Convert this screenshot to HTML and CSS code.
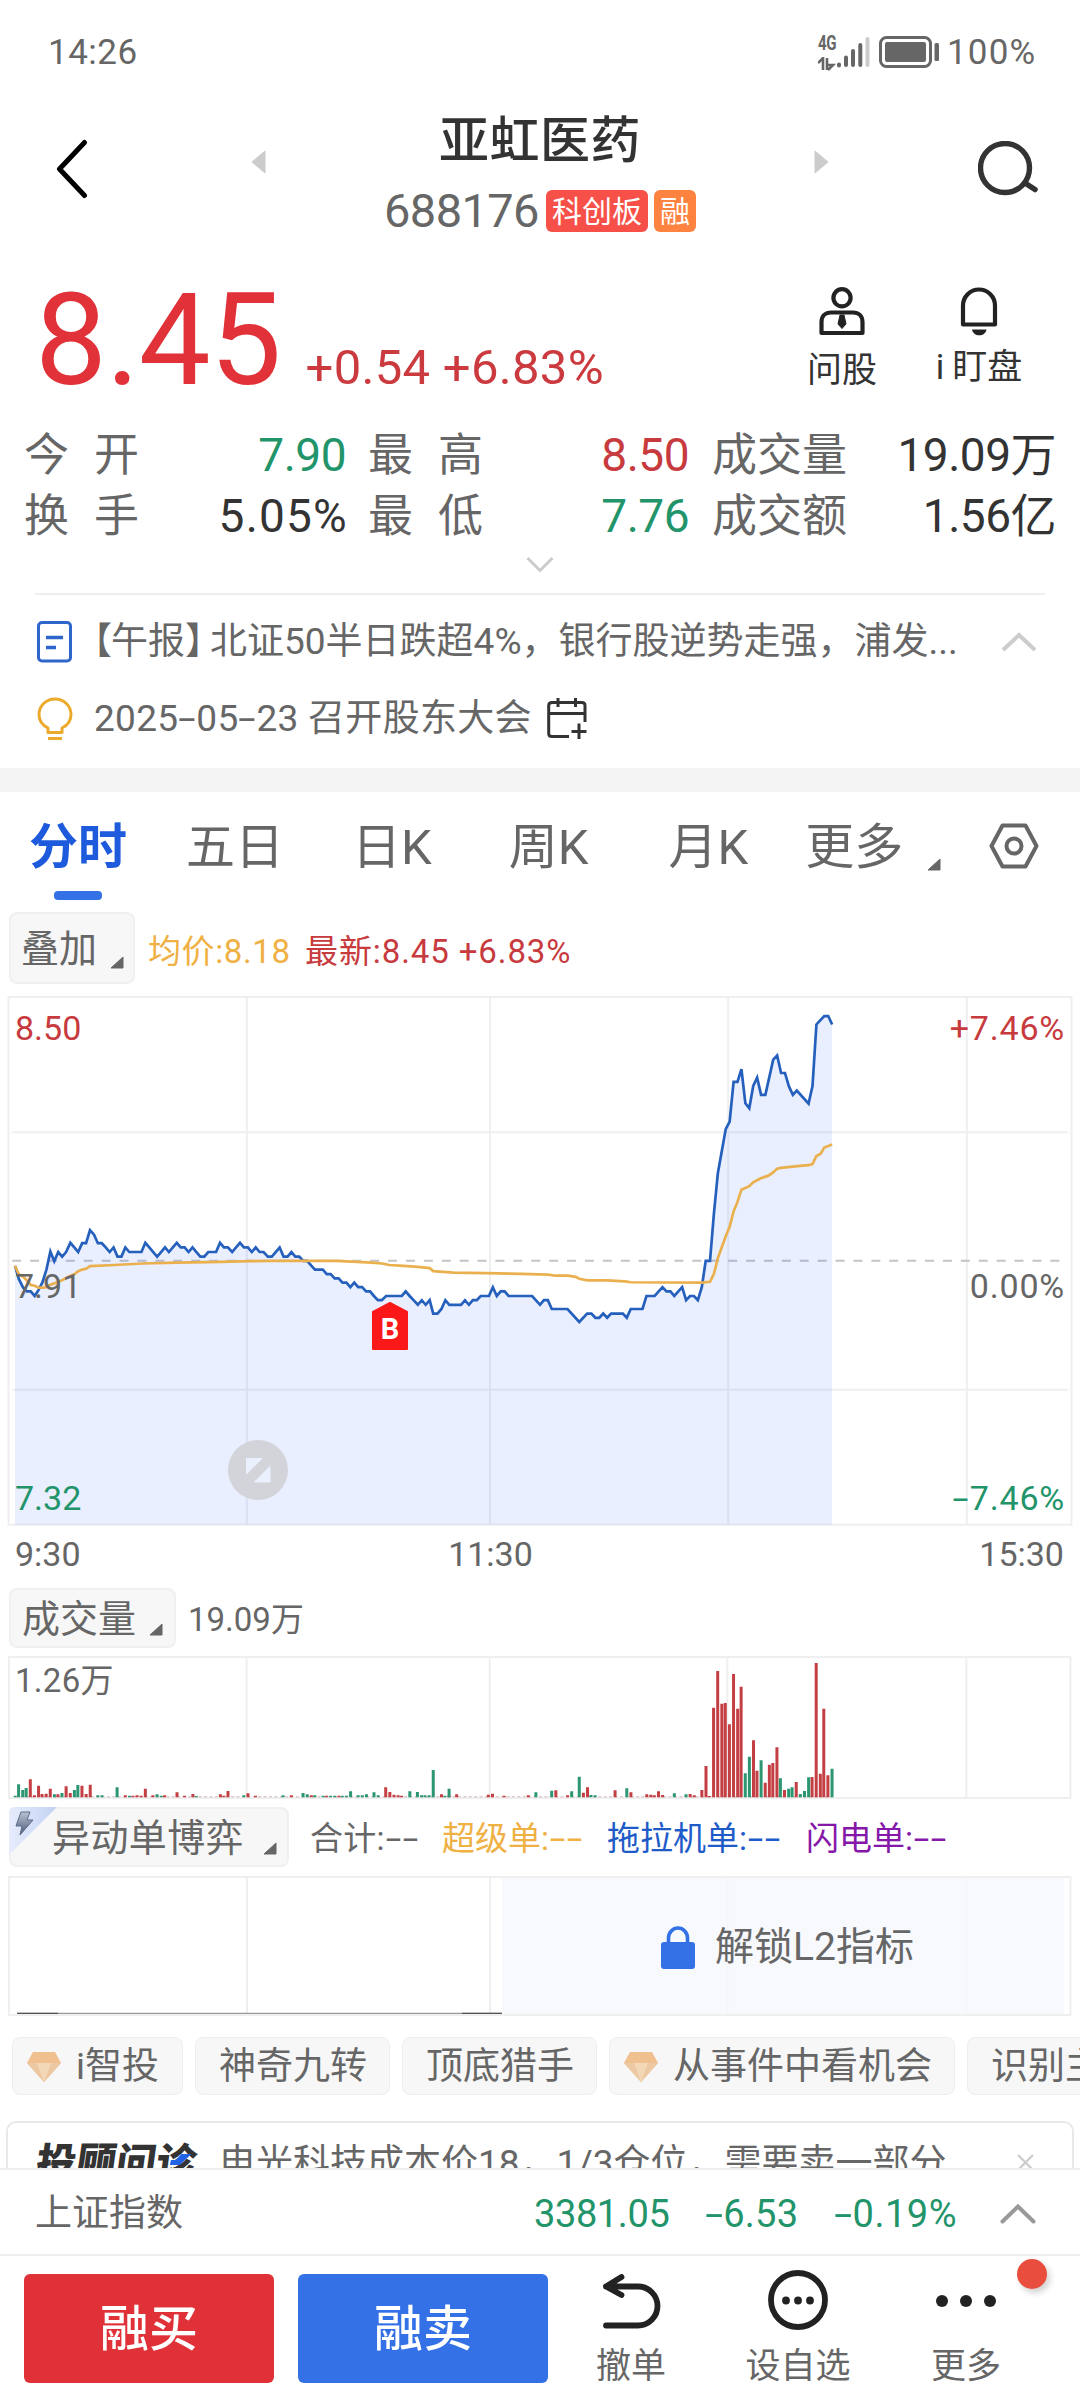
FILE: index.html
```html
<!DOCTYPE html>
<html lang="zh-CN">
<head>
<meta charset="utf-8">
<title>亚虹医药 688176</title>
<link rel="stylesheet" href="styles.css">
</head>
<body>
<div class="status">
  <span class="clock">14:26</span>
  <div class="net">
    <b>4G</b>
    <svg width="20" height="14" viewBox="0 0 20 14"><path d="M0 6L5 1V13M9 13V1M9 8H15L10 13" fill="none" stroke="#666" stroke-width="2.6"/></svg>
  </div>
  <svg class="bars" width="34" height="32" viewBox="0 0 34 32"><g stroke="#666" stroke-width="4" stroke-linecap="round"><path d="M3 28.500V29.500M10 21.500V29M17 15V29M24.300 9V29"/><path d="M31.500 3V29" stroke="#ccc"/></g></svg>
  <svg class="batt" width="60" height="33" viewBox="0 0 60 33"><rect x="1.500" y="1.500" width="50" height="29" rx="6" fill="none" stroke="#666" stroke-width="3"/><rect x="6" y="6" width="41" height="20" rx="2" fill="#666"/><rect x="55.500" y="7" width="4.500" height="18" rx="1.500" fill="#666"/></svg>
  <span class="pct">100%</span>
</div>

<header class="header">
  <svg class="back" width="33" height="60" viewBox="0 0 33 60"><path d="M28.500 3.500L3.500 30L28.500 56.500" fill="none" stroke="#000" stroke-width="5" stroke-linecap="round" stroke-linejoin="round"/></svg>
  <svg class="prev" width="15" height="24" viewBox="0 0 15 24"><path d="M14 1V23L1 12Z" fill="#ccc" stroke="#ccc" stroke-linejoin="round"/></svg>
  <div class="name">
    <h1>亚虹医药</h1>
    <div class="code"><span>688176</span><i class="tag red">科创板</i><i class="tag orange">融</i></div>
  </div>
  <svg class="next" width="15" height="24" viewBox="0 0 15 24"><path d="M1 1V23L14 12Z" fill="#ccc" stroke="#ccc" stroke-linejoin="round"/></svg>
  <svg class="search" width="62" height="56" viewBox="0 0 62 56"><circle cx="27" cy="27" r="24.500" fill="none" stroke="#333" stroke-width="5.400"/><path d="M47 42L57 48.500" stroke="#333" stroke-width="5.500" stroke-linecap="round"/></svg>
</header>

<section class="quote">
  <div class="price">
    <strong>8.45</strong>
    <span>+0.54 +6.83%</span>
  </div>
  <div class="tool ask">
    <svg width="46" height="49" viewBox="0 0 46 49" fill="none" stroke="#222" stroke-width="4.200"><circle cx="23" cy="10.800" r="8.600"/><path d="M2.500 46V35C2.500 29 6.500 25.500 12 25.500H34C39.500 25.500 43.500 29 43.500 35V46Z" stroke-linejoin="round"/><path d="M21 28H25L27 37L23 41.500L19 37Z" fill="#222" stroke="#222" stroke-width="1"/></svg>
    <span>问股</span>
  </div>
  <div class="tool watch">
    <svg width="38" height="49" viewBox="0 0 38 49"><path d="M3 37.500V18.500A16 16 0 0 1 35 18.500V37.500Z" fill="none" stroke="#222" stroke-width="4.200" stroke-linejoin="round"/><path d="M12 42.500H26.500C26 46 23 48.300 19.300 48.300S12.500 46 12 42.500Z" fill="#222"/></svg>
    <span><em>i</em>盯盘</span>
  </div>
</section>

<section class="stats">
  <div><span class="two">今开</span><b class="green">7.90</b></div>
  <div><span class="two">最高</span><b class="red">8.50</b></div>
  <div><span>成交量</span><b class="dark">19.09万</b></div>
  <div><span class="two">换手</span><b class="dark rate">5.05%</b></div>
  <div><span class="two">最低</span><b class="green">7.76</b></div>
  <div><span>成交额</span><b class="dark">1.56亿</b></div>
</section>
<svg class="expand" width="28" height="17" viewBox="0 0 28 17"><path d="M1.500 2L14 14.500L26.500 2" fill="none" stroke="#ccc" stroke-width="3"/></svg>

<section class="news">
  <div class="item">
    <svg width="35" height="42" viewBox="0 0 35 42" fill="none" stroke="#2f66cc"><rect x="1.500" y="1.500" width="32" height="38.500" rx="3.500" stroke-width="3"/><path d="M9 16.500H26M9 26.500H19" stroke-width="3.400"/></svg>
    <p><span class="lb">【</span>午报<span class="rb">】</span>北证50半日跌超4%，银行股逆势走强，浦发...</p>
    <svg class="up" width="36" height="20" viewBox="0 0 36 20"><path d="M2 18L18 3L34 18" fill="none" stroke="#ccc" stroke-width="4"/></svg>
  </div>
  <div class="item">
    <svg width="36" height="44" viewBox="0 0 36 44" fill="none" stroke="#ecaa2c" stroke-width="3"><path d="M11 35.500V31C5 28 2 22.500 2 17.500A16 15.500 0 0 1 34 17.500C34 22.500 31 28 25 31V35.500Z" stroke-linejoin="round"/><path d="M11 41.500H25"/></svg>
    <p>2025<span class="dash">-</span>05<span class="dash">-</span>23 召开股东大会</p>
    <svg class="cal" width="40" height="42" viewBox="0 0 40 42" fill="none" stroke="#333" stroke-width="3"><path d="M22 38.500H5C3 38.500 1.700 37.300 1.700 35.500V7.500C1.700 5.700 3 4.500 5 4.500H35C37 4.500 38 5.700 38 7.500V24M2 15.500H38M11 0V9M28.500 0V9M32 25.500V41M24.500 33.500H39.500"/></svg>
  </div>
</section>

<nav class="tabs">
  <a class="on">分时</a><a class="t2">五日</a><a class="t3">日K</a><a class="t4">周K</a><a class="t5">月K</a><a class="t6">更多</a>
  <svg class="tri" width="14" height="13" viewBox="0 0 14 13"><path d="M13 1V12H1Z" fill="#666" stroke="#666" stroke-linejoin="round"/></svg>
  <svg class="gear" width="50" height="46" viewBox="0 0 50 46" fill="none" stroke="#666" stroke-width="4"><path d="M13.500 2.500H36.500L47.500 23L36.500 43.500H13.500L2.500 23Z" stroke-linejoin="round"/><circle cx="25" cy="23" r="7.500"/></svg>
</nav>

<div class="legend overlay">
  <button>叠加<svg width="14" height="13" viewBox="0 0 14 13"><path d="M13 1V12H1Z" fill="#666" stroke="#666" stroke-linejoin="round"/></svg></button>
  <span class="amber">均价:8.18</span><span class="red">最新:8.45 +6.83%</span>
</div>

<div class="chart">
  <svg width="1080" height="532" viewBox="0 39 3024 1391" preserveAspectRatio="none">
    <g class="grid"><path d="M24 44H3000V1424H24ZM691 44V1424M1372 44V1424M2039 44V1424M2707 44V1424M34 398H2990M34 1071H2990"/></g>
    <path d="M34 734H2990" fill="none" stroke="#c4c4c6" stroke-width="2" stroke-dasharray="9 8.900" vector-effect="non-scaling-stroke"/>
    <path class="area" d="M42,747 53,782 64,803 75,814 86,814 97,826 108,810 119,790 130,757 141,710 152,735 163,711 174,723 185,711 197,687 208,699 219,711 230,688 241,688 252,654 263,665 274,688 285,688 296,699 307,711 318,699 329,723 340,723 351,699 362,711 396,711 407,687 418,699 429,711 440,723 451,711 462,699 473,711 484,699 495,687 506,699 517,699 528,711 539,699 550,711 561,723 572,723 583,711 605,711 616,687 627,699 638,699 650,711 661,699 672,687 683,699 694,699 705,711 716,699 727,711 738,711 750,723 761,723 772,711 783,699 794,723 805,723 816,711 827,723 838,723 849,734 860,734 871,746 882,757 904,757 915,769 926,769 937,780 948,780 959,791 970,791 981,803 992,791 1003,803 1014,803 1025,814 1036,814 1047,826 1058,837 1069,837 1081,826 1125,826 1136,814 1147,826 1158,837 1170,849 1181,837 1192,849 1203,837 1213,872 1225,872 1236,860 1247,837 1258,849 1291,849 1302,837 1313,849 1324,837 1335,837 1346,826 1369,826 1380,803 1391,826 1402,814 1413,814 1424,826 1490,826 1512,849 1523,837 1534,837 1545,860 1589,860 1622,894 1644,872 1656,872 1667,883 1678,883 1689,872 1700,883 1711,872 1744,872 1755,883 1766,860 1799,860 1810,826 1833,826 1855,803 1866,814 1877,814 1888,826 1910,803 1921,837 1932,826 1943,826 1954,837 1965,803 1976,734 1988,734 1999,610 2010,505 2032,390 2043,370 2054,266 2065,266 2076,233 2087,322 2098,335 2109,277 2120,255 2131,300 2143,300 2165,208 2176,197 2187,243 2198,243 2209,278 2220,300 2231,289 2264,323 2275,277 2286,116 2308,94 2319,94 2330,116V1424H42Z"/>
    <path class="line blue" d="M42,747 53,782 64,803 75,814 86,814 97,826 108,810 119,790 130,757 141,710 152,735 163,711 174,723 185,711 197,687 208,699 219,711 230,688 241,688 252,654 263,665 274,688 285,688 296,699 307,711 318,699 329,723 340,723 351,699 362,711 396,711 407,687 418,699 429,711 440,723 451,711 462,699 473,711 484,699 495,687 506,699 517,699 528,711 539,699 550,711 561,723 572,723 583,711 605,711 616,687 627,699 638,699 650,711 661,699 672,687 683,699 694,699 705,711 716,699 727,711 738,711 750,723 761,723 772,711 783,699 794,723 805,723 816,711 827,723 838,723 849,734 860,734 871,746 882,757 904,757 915,769 926,769 937,780 948,780 959,791 970,791 981,803 992,791 1003,803 1014,803 1025,814 1036,814 1047,826 1058,837 1069,837 1081,826 1125,826 1136,814 1147,826 1158,837 1170,849 1181,837 1192,849 1203,837 1213,872 1225,872 1236,860 1247,837 1258,849 1291,849 1302,837 1313,849 1324,837 1335,837 1346,826 1369,826 1380,803 1391,826 1402,814 1413,814 1424,826 1490,826 1512,849 1523,837 1534,837 1545,860 1589,860 1622,894 1644,872 1656,872 1667,883 1678,883 1689,872 1700,883 1711,872 1744,872 1755,883 1766,860 1799,860 1810,826 1833,826 1855,803 1866,814 1877,814 1888,826 1910,803 1921,837 1932,826 1943,826 1954,837 1965,803 1976,734 1988,734 1999,610 2010,505 2032,390 2043,370 2054,266 2065,266 2076,233 2087,322 2098,335 2109,277 2120,255 2131,300 2143,300 2165,208 2176,197 2187,243 2198,243 2209,278 2220,300 2231,289 2264,323 2275,277 2286,116 2308,94 2319,94 2330,116"/>
    <path class="line gold" d="M42,747 53,770 64,775 75,785 86,797 97,799 108,804 125,804 140,797 160,790 175,784 197,773 208,769 219,761 230,757 241,755 252,748 320,745 400,741 495,739 620,737 700,735 760,734 940,734 1000,737 1040,739 1070,741 1090,745 1130,747 1170,750 1203,753 1213,761 1270,765 1360,766 1460,768 1534,770 1556,773 1590,773 1612,776 1622,781 1645,785 1700,785 1750,788 1766,790 1965,791 1988,789 1999,768 2010,727 2032,670 2043,645 2054,605 2065,580 2076,548 2098,539 2109,529 2130,518 2150,512 2165,503 2176,493 2186,491 2240,486 2264,484 2275,481 2286,460 2298,454 2308,438 2330,430"/>
  </svg>
  <span class="lab l top red">8.50</span><span class="lab l mid">7.91</span><span class="lab l bot green">7.32</span>
  <span class="lab r top red">+7.46%</span><span class="lab r mid">0.00%</span><span class="lab r bot green"><span class="dash">-</span>7.46%</span>
  <span class="mark"><svg width="36" height="49" viewBox="0 0 36 49"><path d="M18 1L35 10V47H1V10Z" fill="#fa1818" stroke="#fa1818" stroke-width="2" stroke-linejoin="round"/></svg><b>B</b></span>
  <svg class="full" width="60" height="60" viewBox="0 0 60 60"><circle cx="30" cy="30" r="30" fill="#d3d4d9"/><path d="M18.500 18.500H34L18.500 34Z" fill="#ebf0fe" stroke="#ebf0fe"/><path d="M42 26.500V42H26.500Z" fill="#ebf0fe" stroke="#ebf0fe"/></svg>
</div>
<div class="axis"><span>9:30</span><span>11:30</span><span>15:30</span></div>

<div class="legend vol">
  <button>成交量<svg width="14" height="13" viewBox="0 0 14 13"><path d="M13 1V12H1Z" fill="#666" stroke="#666" stroke-linejoin="round"/></svg></button>
  <span>19.09万</span>
</div>
<div class="chart volume">
  <svg width="1080" height="145" viewBox="0 285 1568 435" preserveAspectRatio="none">
    <g class="grid"><path d="M13 291H1554V714H13ZM358 291V714M711 291V714M1056 291V714M1403 291V714"/></g>
    <path d="M22 710H1208" stroke="#dccccc" stroke-width="1.500" stroke-dasharray="3 2.400" vector-effect="non-scaling-stroke"/>
    <path class="bar up" d="M44 712V658M50 712V706M56 712V677M61 712V702M67 712V701M73 712V686M84 712V703M96 712V679M102 712V699M119 712V677M125 712V702M131 712V674M182 712V706M193 712V707M199 712V706M205 712V707M211 712V686M222 712V706M239 712V706M257 712V697M268 712V707M280 712V702M320 712V703M331 712V693M325 712V707M360 712V700M371 712V707M423 712V706M452 712V706M474 712V707M492 712V707M560 712V682M566 712V696M572 712V704M578 712V706M583 712V707M641 712V703M652 712V706M663 712V703M709 712V704M715 712V701M732 712V707M767 712V706M807 712V691M824 712V706M847 712V698M853 712V682M893 712V691M916 712V697M939 712V703M945 712V704M950 712V706M956 712V694M962 712V705M1002 712V702M1008 712V706M1019 712V690M1025 712V618M1030 712V708M1036 712V443M1042 712V333M1048 712V431M1053 712V429M1059 712V493M1065 712V342M1071 712V446M1076 712V380M1094 712V541M1099 712V632M1111 712V668M1117 712V614M1122 712V609M1128 712V562M1139 712V690M1156 712V666M1179 712V651M1185 712V309M1191 712V641M1196 712V446M1202 712V646"/>
    <path class="bar down" d="M22 712V707M27 712V673M33 712V690M38 712V684M79 712V703M90 712V699M108 712V690M113 712V675M142 712V706M148 712V706M170 712V682M188 712V707M228 712V703M234 712V707M285 712V708M354 712V706M411 712V706M440 712V699M446 712V703M457 712V706M469 712V707M480 712V707M486 712V707M497 712V707M503 712V707M509 712V694M520 712V706M526 712V706M532 712V703M543 712V697M549 712V706M595 712V694M606 712V696M612 712V706M617 712V706M623 712V706M629 712V630M646 712V707M652 712V686M778 712V697M801 712V692M830 712V694M841 712V650M858 712V705M864 712V706M910 712V685M979 712V700M996 712V703M1082 712V640M1088 712V590M1105 712V601M1133 712V655M1145 712V686M1150 712V682M1162 712V702M1168 712V693M1174 712V652M1208 712V626"/>
  </svg>
  <span class="lab vmax">1.26万</span>
</div>

<div class="legend flow">
  <button><svg class="bolt" width="49" height="49" viewBox="0 0 49 49"><defs><linearGradient id="c" x1="0" y1="0" x2="1" y2="0"><stop offset="0" stop-color="#e6ecfb"/><stop offset="1" stop-color="#c3d2f4"/></linearGradient><linearGradient id="z" x1="0" y1="0" x2="0" y2="1"><stop offset="0" stop-color="#b9c3d3"/><stop offset="1" stop-color="#4a5a78"/></linearGradient></defs><path d="M6 0H48L0 48V6Q0 0 6 0Z" fill="url(#c)"/><path d="M12 5H21L18 13H24L11 28L13 19H7Z" fill="url(#z)" stroke="#5d6c88"/></svg>异动单博弈<svg width="14" height="13" viewBox="0 0 14 13"><path d="M13 1V12H1Z" fill="#666" stroke="#666" stroke-linejoin="round"/></svg></button>
  <span class="f1">合计:<i class="dash">-</i><i class="dash">-</i></span><span class="f2 amber">超级单:<i class="dash">-</i><i class="dash">-</i></span><span class="f3">拖拉机单:<i class="dash">-</i><i class="dash">-</i></span><span class="f4">闪电单:<i class="dash">-</i><i class="dash">-</i></span>
</div>
<div class="chart level2">
  <svg width="1080" height="142" viewBox="0 0 1080 142">
    <g class="grid"><path d="M9 2H1070.500V140H9ZM247 2V140M490 2V140M727.500 2V140M966.500 2V140"/></g>
    <path d="M502 3H1064V139H502Z" fill="#f5f8fd" fill-opacity=".8"/>
    <path d="M17 138.300H502" stroke="#999" stroke-width="1.300"/><path d="M17 138.300H58M462 138.300H502" stroke="#555" stroke-width="1.300"/>
  </svg>
  <div class="unlock"><svg width="34" height="43" viewBox="0 0 34 43"><rect y="16" width="34" height="27" rx="3" fill="#3470e6"/><path d="M7.500 18V12A9.500 10 0 0 1 26.500 12V18" fill="none" stroke="#3470e6" stroke-width="3.600"/></svg><span>解锁L2指标</span></div>
</div>

<div class="chips">
  <a class="c1"><svg width="34" height="30" viewBox="0 0 34 30"><path d="M6 0H28L34 11L17 30L0 11Z" fill="#f0c08f"/><path d="M0 11H34L17 30Z" fill="#ecc9a2"/><path d="M10 11H24L17 30Z" fill="#f3d8b8"/></svg>i智投</a><a class="c2">神奇九转</a><a class="c3">顶底猎手</a><a class="c4"><svg width="34" height="30" viewBox="0 0 34 30"><path d="M6 0H28L34 11L17 30L0 11Z" fill="#f0c08f"/><path d="M0 11H34L17 30Z" fill="#ecc9a2"/><path d="M10 11H24L17 30Z" fill="#f3d8b8"/></svg>从事件中看机会</a><a class="c5">识别主</a>
</div>

<div class="advice-clip">
  <div class="advice">
    <b>投顾问诊<svg width="20" height="12" viewBox="0 0 20 12"><path d="M0 6H5L10 0H20L10 11H0Z" fill="#2063e6"/></svg></b>
    <span>电光科技成本价18，1/3仓位，需要卖一部分</span>
    <svg class="close" width="17" height="17" viewBox="0 0 17 17"><path d="M1 1L16 16M16 1L1 16" stroke="#ccc" stroke-width="2.200"/></svg>
  </div>
</div>

<div class="index">
  <span class="iname">上证指数</span><span class="i1">3381.05</span><span class="i2"><i class="dash">-</i>6.53</span><span class="i3"><i class="dash">-</i>0.19%</span>
  <svg width="36" height="21" viewBox="0 0 36 21"><path d="M2.500 18.500L18 3.500L33.500 18.500" fill="none" stroke="#999" stroke-width="4" stroke-linecap="round"/></svg>
</div>

<footer class="actions">
  <a class="btn buy">融买</a><a class="btn sell">融卖</a>
  <a class="act undo"><svg width="58" height="55" viewBox="0 0 58 55" fill="none" stroke="#222" stroke-width="5.800" stroke-linecap="round" stroke-linejoin="round"><path d="M3 51.500H35A19.500 19.500 0 0 0 35 12.500H3M18.500 3L3 12.500L18.500 21"/></svg><span>撤单</span></a>
  <a class="act fav"><svg width="60" height="60" viewBox="0 0 60 60"><circle cx="30" cy="30" r="27" fill="none" stroke="#222" stroke-width="5.800"/><g fill="#222"><circle cx="18" cy="30.500" r="3.900"/><circle cx="30" cy="30.500" r="3.900"/><circle cx="42" cy="30.500" r="3.900"/></g></svg><span>设自选</span></a>
  <a class="act more"><svg width="62" height="14" viewBox="0 0 62 14" fill="#222"><circle cx="7" cy="7" r="6"/><circle cx="31" cy="7" r="6"/><circle cx="55" cy="7" r="6"/></svg><span>更多</span><i class="dot"></i></a>
</footer>
</body>
</html>
```
FILE: styles.css
```css
* { box-sizing: border-box; }
body {
  margin: 0; width: 1080px; height: 2400px; overflow: hidden; background: #fff; color: #666;
  font-family: Roboto, "Noto Sans CJK SC", sans-serif; font-size: 37px; line-height: 60px; white-space: nowrap;
}
svg { display: block; flex: none; }
i, em { font-style: normal; }
a, span { flex: none; }
.red { color: #c73a3d; }
.green { color: #22946a; }
.amber { color: #efb044; }
.dash { display: inline-block; margin: 0 .1em; transform: scaleX(1.7); }

.status { display: flex; align-items: center; height: 104px; padding-left: 48px; font-size: 35px; }
.clock { width: 770px; padding-top: 1px; letter-spacing: .5px; }
.pct { padding-top: 1px; letter-spacing: 1.2px; }
.net { width: 18px; height: 31px; }
.net b { display: block; height: 20px; font-size: 20px; line-height: 13px; letter-spacing: -.5px; transform: scaleX(.75); transform-origin: left; }
.bars { margin-right: 9px; }
.batt { margin-right: 8px; }

.header { display: flex; align-items: center; height: 130px; }
.back { margin-left: 56px; }
.prev { margin: -14px 0 0 162px; }
.name { width: 548px; margin-top: 2px; display: flex; flex-direction: column; align-items: center; gap: 22px; }
.name h1 { margin: 3px 0 -3px; font-size: 50px; font-weight: 500; line-height: 60px; color: #333; letter-spacing: .5px; }
.code { display: flex; align-items: center; height: 42px; gap: 9px; font-size: 47px; }
.code span { letter-spacing: -.6px; margin-right: -2px; }
.tag { height: 42px; line-height: 43px; padding: 0 6px; border-radius: 6px; color: #fff; font-size: 30px; }
.tag.red { background: #f75048; }
.tag.orange { background: #ff8340; margin-left: -3px; }
.next { margin-top: -14px; }
.search { margin: -1px 0 0 149px; }

.quote { display: flex; height: 190px; align-items: flex-start; }
.price { display: flex; align-items: baseline; gap: 25px; width: 775px; padding: 42px 0 0 35px; }
.price strong { font-size: 128px; font-weight: 400; line-height: 128px; letter-spacing: -1px; color: #e03238; }
.price span { font-size: 49px; color: #cb3a3e; letter-spacing: .3px; }
.tool { display: flex; flex-direction: column; align-items: center; width: 124px; padding-top: 53px; font-size: 35px; line-height: 48px; color: #333; }
.ask { margin-left: 5px; }
.tool span { margin-top: 11px; }
.watch { margin-left: 13px; }
.watch span { margin-top: 8px; }
.watch em { margin-right: 8px; }

.stats { display: grid; grid-template-columns: 322px 321px 345px; column-gap: 22px; grid-auto-rows: 61px; padding: 1px 0 0 24px; font-size: 45px; line-height: 61px; }
.stats div { display: flex; justify-content: space-between; }
.stats div:nth-child(3n) { padding-left: 1px; }
.stats b { font-weight: 400; font-size: 46px; letter-spacing: -.5px; }
.stats .dark { color: #333; }
.stats .rate { letter-spacing: 1.2px; margin-right: -2px; }
.two { letter-spacing: 25px; }
.expand { margin: 9px auto 20px; }

.news { margin: 0 35px; border-top: 2px solid #eee; padding-top: 8px; height: 175px; }
.item { display: flex; align-items: center; height: 77px; padding-left: 2px; }
.item p { margin: 0 0 0 20px; letter-spacing: .3px; }
.item:first-child p { width: 889px; margin-left: 5px; letter-spacing: 0; }
.lb { margin-left: -2px; letter-spacing: -1px; }
.rb { letter-spacing: -12px; }
.up { margin-left: 35px; }
.cal { margin-left: 15px; }
.item:last-child p { padding-top: 1px; }
.item:last-child svg:first-child { margin-right: 1px; }

.tabs { border-top: 24px solid #f4f4f4; display: flex; height: 132px; padding: 26px 0 0 29px; font-size: 49px; }
.tabs .on { color: #1e5bdc; font-weight: 700; height: 82px; }
.on::after { content: ""; display: block; width: 48px; height: 9px; margin: 13px auto 0; border-radius: 4px; background: #3470e6; }
.t2 { margin-left: 59px; } .t3 { margin-left: 68px; } .t4 { margin-left: 77px; } .t5 { margin-left: 80px; } .t6 { margin-left: 57px; }
.tri { margin: 40px 0 0 24px; }
.gear { margin: 5px 0 0 48px; }

.legend { display: flex; align-items: center; height: 60px; font-size: 33px; }
.legend button {
  position: relative; display: flex; align-items: center; height: 60px; padding: 2px 11px 0 11px; border: 2px solid #f0f0f0; border-radius: 8px;
  background: #f7f7f7; color: #666; font: 38px/56px Roboto, "Noto Sans CJK SC", sans-serif;
}
.legend button svg { align-self: flex-end; margin: 0 0 10px 13px; }
.legend > span { padding-top: 3px; }
.overlay { margin-top: 12px; height: 72px; letter-spacing: .6px; }
.overlay button { height: 72px; padding: 1px 9px 0 10px; }
.overlay button svg { margin-bottom: 13px; }
.overlay .amber { margin-left: 13px; width: 157px; padding-top: 8px; }
.overlay .red { padding-top: 8px; letter-spacing: .9px; }

.chart { position: relative; height: 532px; margin-top: 11px; }
.grid path { fill: none; stroke: #efeff0; stroke-width: 2; vector-effect: non-scaling-stroke; }
.area { fill: #2c66ff; fill-opacity: .1; }
.line { fill: none; stroke-width: 2.7; vector-effect: non-scaling-stroke; }
.blue { stroke: #2660bd; }
.gold { stroke: #ebb04e; }
.lab { position: absolute; font-size: 34px; line-height: 40px; }
.l { left: 15px; } .r { right: 15px; letter-spacing: .8px; }
.top { top: 13px; } .mid { top: 271px; } .bot { top: 483px; }
.mark { position: absolute; left: 372px; top: 307px; }
.mark b { position: absolute; left: 0; top: 8px; width: 36px; text-align: center; font: 700 29px/38px Roboto, sans-serif; color: #fff; }
.full { position: absolute; left: 228px; top: 445px; }
.axis { display: grid; grid-template-columns: 1fr 1fr 1fr; height: 53px; line-height: 54px; padding: 0 16px 0 15px; font-size: 34px; }
.axis span:nth-child(2) { text-align: center; margin-left: -98px; }
.axis span:last-child { text-align: right; }

.vol { margin-top: 8px; gap: 12px; }
.volume { height: 145px; margin-top: 7px; }
.vmax { left: 15px; top: 6px; font-size: 33px; letter-spacing: .3px; }
.bar { fill: none; stroke-width: 3; vector-effect: non-scaling-stroke; }
.bar.up { margin: 0; stroke: #c43f43; }
.bar.down { stroke: #2c9671; }

.vol button, .flow button, .overlay button { margin: 0 0 0 9px; }
.flow { margin-top: 7px; }
.flow button { padding-left: 41px; width: 280px; letter-spacing: .4px; }
.legend .bolt { position: absolute; left: -2px; top: -2px; margin: 0; }
.flow button svg:last-child { margin-left: 19px; }
.flow .dash { margin: 0 .12em; }
.f1 { margin-left: 21px; width: 132px; letter-spacing: .2px; }
.f2 { width: 165px; }
.f3 { width: 199px; color: #1e5bc8; }
.f4 { color: #8518a8; }

.level2 { height: 142px; margin-top: 8px; }
.unlock { position: absolute; left: 661px; top: 42px; display: flex; align-items: center; gap: 20px; font-size: 39px; }

.chips { display: flex; gap: 12px; margin: 20px 0 0 12px; overflow: hidden; height: 58px; }
.chips a { display: flex; align-items: center; height: 58px; padding-top: 2px; border: 1px solid #eee; border-radius: 8px; background: #f7f7f7; }
.chips svg { margin-right: 15px; }
.chips .c1 { padding-left: 14px; width: 171px; }
.chips .c2 { padding-left: 23px; width: 195px; }
.chips .c3 { padding-left: 23px; width: 195px; }
.chips .c4 { padding-left: 14px; width: 346px; }
.chips .c5 { padding-left: 23px; width: 220px; }

.advice-clip { height: 47px; margin: 26px 6px 0; overflow: hidden; }
.advice { display: flex; height: 90px; padding: 11px 0 0 27px; border: 2px solid #e8e8e8; border-radius: 10px; }
.advice b { position: relative; width: 184px; font-size: 40px; font-weight: 900; color: #333; transform: skewX(-8deg); }
.advice b svg { position: absolute; left: 134px; top: 20px; }
.close { margin: 20px 0 0 60px; }
.advice span { width: 738px; }

.index { display: flex; align-items: center; height: 88px; padding: 3px 0 0 35px; border-top: 2px solid #efefef; border-bottom: 2px solid #efefef; }
.index span { font-size: 38px; color: #22946a; letter-spacing: -.4px; }
.index .iname { color: #666; width: 499px; font-size: 37px; letter-spacing: 0; }
.index .i1 { width: 171px; } .index .i2 { width: 129px; letter-spacing: .2px; } .index .i3 { width: 166px; letter-spacing: .5px; }

.actions { display: flex; padding: 18px 0 0 24px; }
.btn { width: 250px; height: 109px; border-radius: 6px; font-size: 49px; font-weight: 500; line-height: 112px; color: #fff; text-align: center; }
.buy { background: #e03138; }
.sell { background: #3470e6; margin-left: 24px; }
.act { position: relative; display: flex; flex-direction: column; align-items: center; justify-content: space-between; height: 117px; font-size: 35px; line-height: 48px; }
.undo { margin-left: 46px; width: 74px; }
.undo svg { margin-left: 2px; }
.fav { margin: -4px 0 0 70px; height: 121px; width: 120px; }
.more { margin-left: 73px; width: 70px; }
.more svg { margin-top: 20px; }
.dot { position: absolute; left: 86px; top: -15px; width: 30px; height: 30px; border-radius: 50%; background: #e84d3e; box-shadow: 3px 4px 6px rgba(0, 0, 0, .18); }
```
